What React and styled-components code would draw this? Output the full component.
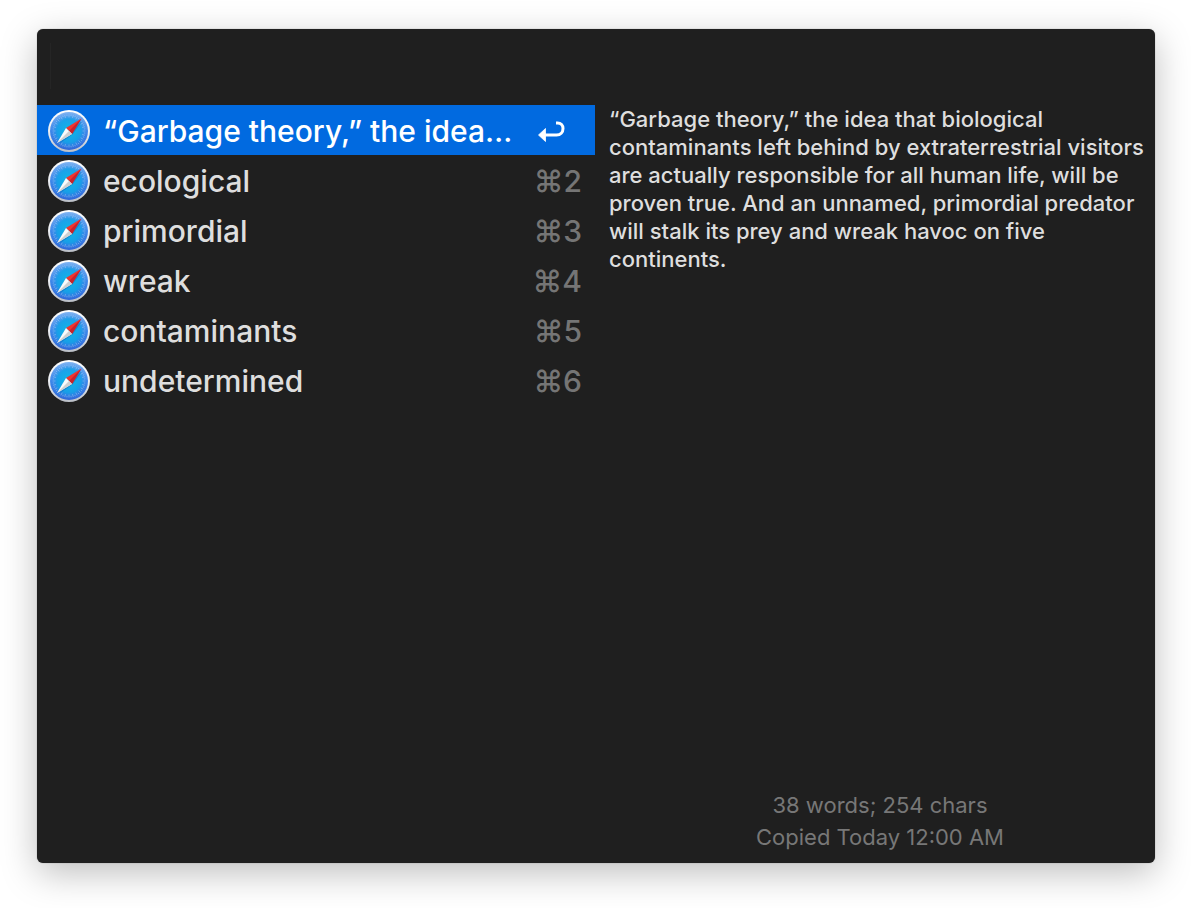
import React, { useId, useState } from "react";
import styled, { createGlobalStyle } from "styled-components";

const GlobalStyle = createGlobalStyle`
  *, *::before, *::after { box-sizing: border-box; }
  body {
    margin: 0;
    background: #fff;
    font-family: Inter, "Liberation Sans", sans-serif;
    -webkit-font-smoothing: antialiased;
  }
`;

const Desktop = styled.main`
  display: flex;
  min-height: 100vh;
  padding: 29px 36px 45px 37px;
`;

const Window = styled.div`
  flex: 1;
  min-width: 0;
  display: flex;
  flex-direction: column;
  background: #1f1f1f;
  border-radius: 6px;
  box-shadow: 0 0 1px rgba(0, 0, 0, 0.5), 0 10px 36px rgba(0, 0, 0, 0.26);
`;

const SearchBar = styled.div`
  height: 76px;
  padding: 14px 13px 16px;
`;

const SearchInput = styled.input`
  display: block;
  width: 100%;
  height: 46px;
  padding: 0 4px;
  border: 0;
  border-left: 1px solid #252525;
  outline: 0;
  background: transparent;
  color: #dedede;
  font: inherit;
  font-size: 30px;
`;

const Panes = styled.div`
  flex: 1;
  display: grid;
  grid-template-columns: minmax(0, 1fr) minmax(0, 1fr);
  column-gap: 2px;
`;

const ClipList = styled.ul`
  margin: 0;
  padding: 0;
  list-style: none;
`;

const ClipButton = styled.button`
  display: flex;
  align-items: center;
  gap: 13px;
  width: 100%;
  height: 50px;
  padding: 2px 13px 0 11px;
  border: 0;
  background: ${(p) => (p.$selected ? "#016ae0" : "transparent")};
  color: ${(p) => (p.$selected ? "#fff" : "#dedede")};
  font: inherit;
  font-size: 30px;
  font-weight: 500;
  line-height: 40px;
  text-align: left;
`;

const ClipTitle = styled.span`
  flex: 1;
  min-width: 0;
  overflow: hidden;
  white-space: nowrap;
`;

const Shortcut = styled.span`
  flex: none;
  color: #757575;
`;

const ReturnSlot = styled.span`
  flex: none;
  display: flex;
  padding: 2px 16px 0 0;
`;

const Preview = styled.section`
  display: flex;
  flex-direction: column;
  justify-content: space-between;
  padding: 0 4px 10px 12px;
`;

const PreviewText = styled.p`
  margin: 0;
  color: #dedede;
  font-size: 22px;
  font-weight: 500;
  line-height: 28px;
`;

const Meta = styled.p`
  margin: 0;
  color: #777;
  font-size: 22px;
  line-height: 32px;
  text-align: center;
`;

const MetaLine = styled.span`
  display: block;
`;

const Icon = styled.svg`
  flex: none;
  display: block;
`;

function SafariIcon() {
  const id = useId();
  const ticks = Array.from({ length: 48 }, (_, i) => i * 7.5);
  return (
    <Icon width="42" height="42" viewBox="0 0 84 84" aria-hidden="true">
      <defs>
        <linearGradient id={`${id}rim`} x1="0" y1="0" x2="0" y2="1">
          <stop offset="0" stopColor="#ffffff" />
          <stop offset="0.6" stopColor="#e6e9ee" />
          <stop offset="1" stopColor="#b9bec6" />
        </linearGradient>
        <linearGradient id={`${id}base`} x1="0" y1="0" x2="0" y2="1">
          <stop offset="0" stopColor="#80b4f2" />
          <stop offset="0.5" stopColor="#3e87ea" />
          <stop offset="1" stopColor="#3168d8" />
        </linearGradient>
        <radialGradient id={`${id}glow`} cx="0.5" cy="0.5" r="0.5">
          <stop offset="0" stopColor="#0cbbe8" />
          <stop offset="0.65" stopColor="#14a2e8" stopOpacity="0.9" />
          <stop offset="1" stopColor="#2f86ea" stopOpacity="0" />
        </radialGradient>
      </defs>
      <circle cx="42" cy="42" r="42" fill={`url(#${id}rim)`} />
      <circle cx="42" cy="42" r="38" fill={`url(#${id}base)`} />
      <circle cx="42" cy="42" r="36" fill={`url(#${id}glow)`} />
      <g stroke="#d5e9ff" strokeOpacity="0.5" strokeWidth="1.3">
        {ticks.map((angle, i) => (
          <line
            key={angle}
            x1="42"
            y1="9"
            x2="42"
            y2={i % 2 ? 12 : 15}
            transform={`rotate(${angle} 42 42)`}
          />
        ))}
      </g>
      <path d="M20 69 L49 49 L70 20 Z" fill="#0b4aa0" opacity="0.35" />
      <path d="M67 17 L36 36 L48 48 Z" fill="#f0352f" />
      <path d="M67 17 L42 42 L48 48 Z" fill="#c9222a" />
      <path d="M18 66 L36 36 L48 48 Z" fill="#fafafa" />
      <path d="M18 66 L42 42 L48 48 Z" fill="#cfcfd1" />
    </Icon>
  );
}

function ReturnIcon() {
  return (
    <Icon width="28" height="24" viewBox="0 0 28 24" aria-hidden="true">
      <path
        d="M18 3 H19.5 C23 3 25 5.5 25 8.5 C25 12.5 22.5 15 18.5 15 H7"
        fill="none"
        stroke="#fff"
        strokeWidth="3"
      />
      <path
        d="M0.5 15 L7.5 8.5 V21.5 Z"
        fill="#fff"
        stroke="#fff"
        strokeWidth="0.8"
        strokeLinejoin="round"
      />
    </Icon>
  );
}

const clips = [
  "“Garbage theory,” the idea…",
  "ecological",
  "primordial",
  "wreak",
  "contaminants",
  "undetermined",
];

export default function App() {
  const [query, setQuery] = useState("");
  return (
    <>
      <GlobalStyle />
      <Desktop>
        <Window>
          <SearchBar>
            <SearchInput
              type="text"
              aria-label="Search clipboard history"
              value={query}
              onChange={(e) => setQuery(e.target.value)}
            />
          </SearchBar>
          <Panes>
            <ClipList>
              {clips.map((title, i) => (
                <li key={title}>
                  <ClipButton type="button" $selected={i === 0}>
                    <SafariIcon />
                    <ClipTitle>{title}</ClipTitle>
                    {i === 0 ? (
                      <ReturnSlot>
                        <ReturnIcon />
                      </ReturnSlot>
                    ) : (
                      <Shortcut>⌘{i + 1}</Shortcut>
                    )}
                  </ClipButton>
                </li>
              ))}
            </ClipList>
            <Preview>
              <PreviewText>
                “Garbage theory,” the idea that biological contaminants left
                behind by extraterrestrial visitors are actually responsible for
                all human life, will be proven true. And an unnamed, primordial
                predator will stalk its prey and wreak havoc on five continents.
              </PreviewText>
              <Meta>
                <MetaLine>38 words; 254 chars</MetaLine>
                <MetaLine>Copied Today 12:00 AM</MetaLine>
              </Meta>
            </Preview>
          </Panes>
        </Window>
      </Desktop>
    </>
  );
}
